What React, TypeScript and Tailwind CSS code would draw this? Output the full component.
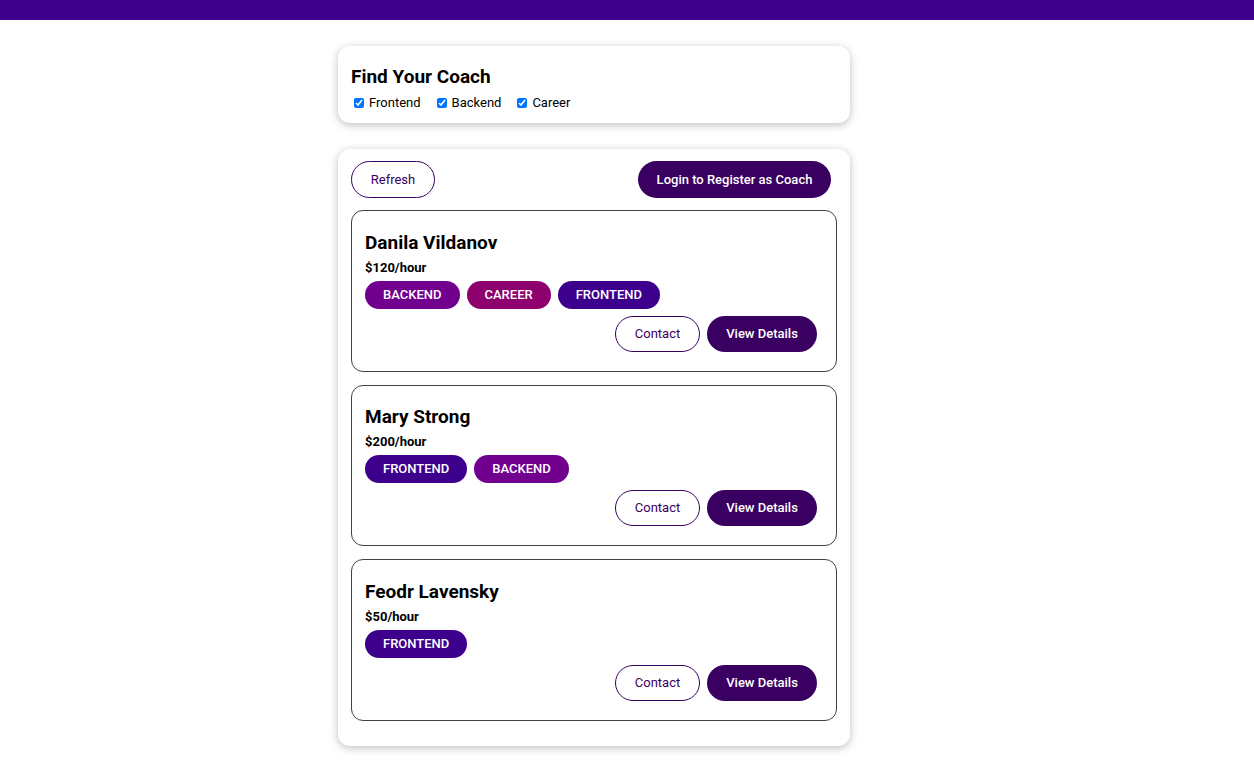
import { useState } from 'react';

type Coach = {
  id: string;
  name: string;
  rate: number;
  areas: string[];
};

const coaches: Coach[] = [
  { id: 'c1', name: 'Danila Vildanov', rate: 120, areas: ['backend', 'career', 'frontend'] },
  { id: 'c2', name: 'Mary Strong', rate: 200, areas: ['frontend', 'backend'] },
  { id: 'c3', name: 'Feodr Lavensky', rate: 50, areas: ['frontend'] },
];

const badgeColors: Record<string, string> = {
  frontend: 'bg-[#3d008d]',
  backend: 'bg-[#71008f]',
  career: 'bg-[#8d006e]',
};

function Badge({ area }: { area: string }) {
  return (
    <span
      className={`inline-flex h-[28px] items-center rounded-full px-[18px] text-[13px] font-medium uppercase text-white ${badgeColors[area]}`}
    >
      {area}
    </span>
  );
}

function CoachItem({ coach }: { coach: Coach }) {
  return (
    <li className="rounded-xl border border-[#424242] px-[13px] pt-[17.5px] pb-[19px]">
      <h3 className="text-[19px] font-bold leading-[28px]">{coach.name}</h3>
      <h4 className="mt-[2px] text-[13px] font-bold leading-[18px]">${coach.rate}/hour</h4>
      <div className="mt-[4px] flex gap-[7px]">
        {coach.areas.map((a) => (
          <Badge key={a} area={a} />
        ))}
      </div>
      <div className="mt-[7px] mr-[6px] flex justify-end gap-[7px]">
        <button className="h-[36px] w-[85px] rounded-full border border-[#3a0061] text-[13px] text-[#3a0061]">
          Contact
        </button>
        <button className="h-[36px] w-[110px] rounded-full bg-[#3a0061] text-[13px] font-medium text-white">
          View Details
        </button>
      </div>
    </li>
  );
}

export default function App() {
  const [filters, setFilters] = useState({ frontend: true, backend: true, career: true });

  const toggle = (key: keyof typeof filters) =>
    setFilters((f) => ({ ...f, [key]: !f[key] }));

  const visible = coaches.filter((c) =>
    c.areas.some((a) => filters[a as keyof typeof filters])
  );

  return (
    <div className="min-h-screen bg-white font-['Roboto',sans-serif] text-black">
      <header className="h-5 w-full bg-[#3d008d]" />

      <div className="ml-[338px] w-[512px]">
        <section className="mt-[26px] rounded-xl bg-white px-[13px] pt-[17px] pb-[11px] shadow-[0_2px_8px_rgba(0,0,0,0.26)]">
          <h2 className="text-[19px] font-bold leading-[28px]">Find Your Coach</h2>
          <div className="mt-[3px] flex items-center gap-[13px] text-[13px] leading-[18px]">
            {(['frontend', 'backend', 'career'] as const).map((k) => (
              <label key={k} className="flex items-center gap-[5px] pl-[3px]">
                <input
                  type="checkbox"
                  checked={filters[k]}
                  onChange={() => toggle(k)}
                  className="h-[10px] w-[10px] accent-[#0075ff]"
                />
                <span className="capitalize">{k}</span>
              </label>
            ))}
          </div>
        </section>

        <section className="mt-[26px] mb-8 rounded-xl bg-white px-[13px] pt-[12px] pb-[25px] shadow-[0_2px_8px_rgba(0,0,0,0.26)]">
          <div className="flex items-center justify-between">
            <button className="h-[37px] w-[84px] rounded-full border border-[#3a0061] text-[13px] text-[#3a0061]">
              Refresh
            </button>
            <button className="mr-[6px] h-[37px] w-[193px] rounded-full bg-[#3a0061] text-[13px] font-medium text-white">
              Login to Register as Coach
            </button>
          </div>
          <ul className="mt-[12px] flex flex-col gap-[13px]">
            {visible.map((c) => (
              <CoachItem key={c.id} coach={c} />
            ))}
          </ul>
        </section>
      </div>
    </div>
  );
}
